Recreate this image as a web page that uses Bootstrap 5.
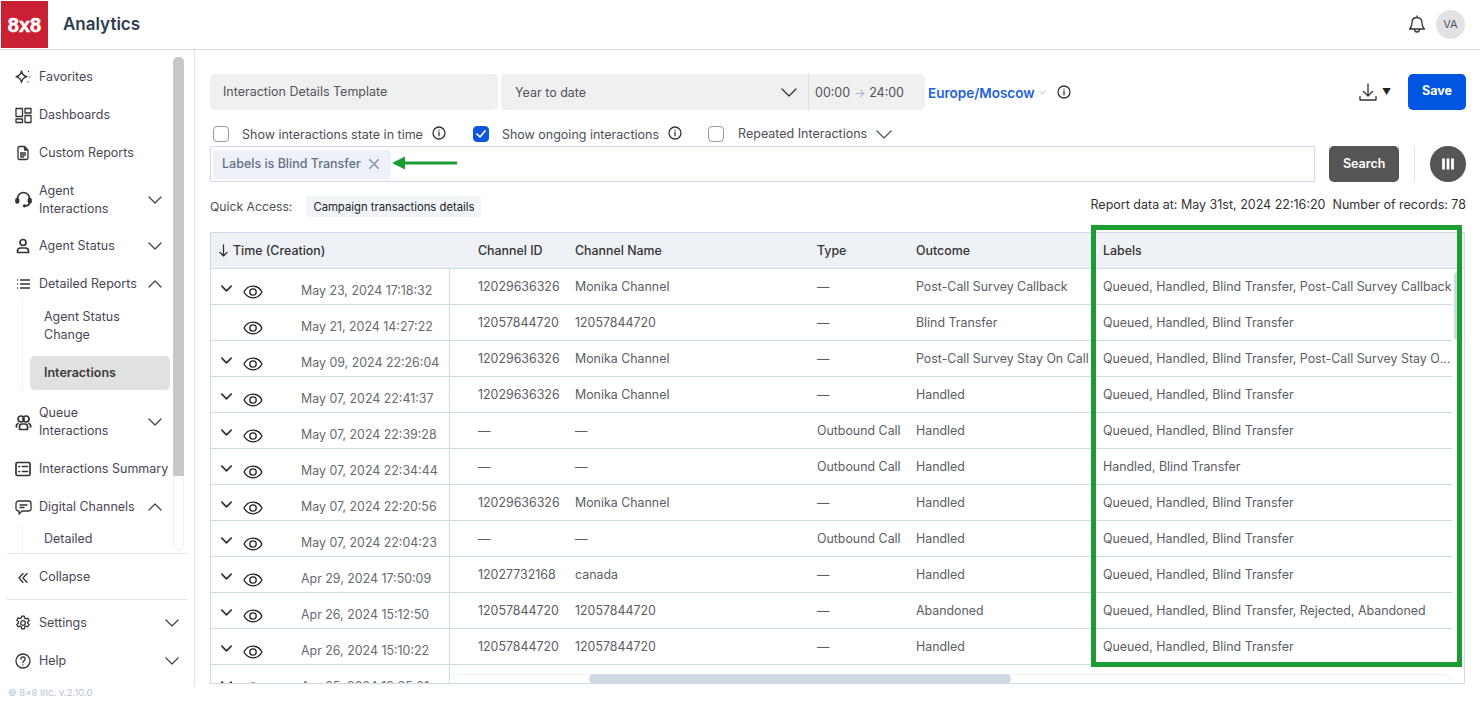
<!DOCTYPE html>
<html lang="en">
<head>
    <meta charset="UTF-8">
    <meta name="viewport" content="width=device-width, initial-scale=1.0">
    <title>Analytics</title>
    <link href="https://cdn.jsdelivr.net/npm/bootstrap@5.3.0/dist/css/bootstrap.min.css" rel="stylesheet">
    <style>
        html, body { height: 705px; overflow: hidden; }
        body { font-family: Inter, "Liberation Sans", sans-serif; font-size: 12.5px; color: #4b4f57; background: #fff; position: relative; }
        svg { display: block; flex: none; fill: none; stroke: currentColor; stroke-width: 1.3; stroke-linecap: round; stroke-linejoin: round; }
        svg.line-md { stroke-width: 1.7; }
        svg.line-bold { stroke-width: 2.2; }
        svg.line-heavy { stroke-width: 2.8; stroke-linecap: butt; }
        .sprite-defs { position: absolute; }
        .tone-dark { color: #333; }

        .app-top { height: 50px; border-bottom: 1px solid #d5dde5; padding-right: 15px; }
        .logo-box { width: 47px; height: 47px; margin-left: 1px; background: #c92033; color: #fff; font-family: "Liberation Sans", sans-serif; font-weight: 700; font-size: 20px; -webkit-text-stroke: .5px #fff; }
        .app-title { margin-left: 15px; font-size: 17px; font-weight: 600; color: #2c3e50; }
        .user-dot { width: 29px; height: 29px; border-radius: 50%; background: #e3e3e3; color: #4a5568; font-size: 11px; margin-left: 9px; }

        .app-body { height: 655px; }
        .side-bar { width: 195px; height: 636px; border-right: 1px solid #dde1e6; flex: none; }
        .side-scroll { height: 503px; overflow: hidden; position: relative; padding-top: 7px; }
        .side-item { height: 38px; padding: 2px 32px 0 15px; color: #4a4653; }
        .side-item.tall { height: 55px; line-height: 18px; padding-top: 2px; }
        .side-item.tall-q { height: 56px; margin-top: 3px; }
        .side-item.wide-txt { padding-right: 0; }
        .side-item .ico { width: 24px; flex: none; color: #333; }
        .side-item .label-txt { flex: 1; white-space: nowrap; }
        .side-item .chev { color: #444; }
        .side-sub { margin-left: 22px; border-left: 1px solid #eee; padding: 6px 24px 0 7px; }
        .side-sub a { display: block; color: #4a4653; text-decoration: none; line-height: 18px; padding-left: 14px; }
        .side-sub a.on { background: #e1e1e1; border-radius: 5px; height: 34px; line-height: 33px; margin-top: 12px; font-weight: 600; color: #3a3a3a; }
        .side-sub.clip { padding-top: 5px; height: 44px; }
        .scroll-track { position: absolute; left: 173px; top: 7px; width: 11px; height: 493px; border: 1px solid #f0f0f0; border-radius: 4px; }
        .scroll-thumb { position: absolute; left: 173px; top: 7px; width: 11px; height: 419px; background: #c8c8c8; border-radius: 5px 5px 0 0; }
        .side-rule { border-top: 1px solid #e2e2e2; margin: 0 7px; }
        .side-rule.low { margin-top: 4px; margin-bottom: 3px; }
        .side-item.side-foot { padding-right: 15px; }
        .side-item.collapse-row { height: 41px; padding-top: 6px; }
        .copy-txt { position: absolute; left: 8px; top: 686px; font-size: 9.5px; color: #b5c4d6; }

        .main-area { padding: 24px 14px 0 15px; min-width: 0; }
        .soft-field { height: 36px; background: #f0f0f0; border-radius: 5px; color: #50535a; }
        .tpl-field { width: 288px; padding-left: 13px; }
        .range-field { width: 424px; margin-left: 3px; padding-left: 14px; }
        .range-field > span:first-child { padding-top: 3px; }
        .range-chev { margin-right: 11px; }
        .time-part { border-left: 1px solid #dedede; height: 36px; width: 117px; padding-left: 6px; padding-top: 3px; white-space: nowrap; }
        .time-part em { font-style: normal; color: #a9b6c6; }
        .zone-link { margin-left: 3px; padding-top: 3px; font-size: 13.5px; font-weight: 600; color: #1d5fdc; text-decoration: none; }
        .zone-chev { color: #8fa3bd; margin-left: 4px; }
        .zone-info { margin-left: 11px; }
        .down-caret { font-size: 9px; color: #222; margin-right: 17px; margin-left: 4px; }
        .save-btn { width: 58px; height: 36px; background: #0056e0; border: 0; color: #fff; font-weight: 700; font-size: 12.5px; padding: 0 0 2px; border-radius: 5px; }

        .check-row { height: 20px; margin-top: 14px; padding-left: 3px; }
        .box-check { width: 16px; height: 16px; border: 1px solid #9a9a9a; border-radius: 4px; flex: none; background: #fff; }
        .box-check.on { background: #0d56df; border-color: #0d56df; color: #fff; margin-left: 27px; }
        .box-check.third { margin-left: 26px; }
        .check-txt { margin-left: 13px; padding-top: 3px; }
        .check-txt.third { margin-left: 14px; padding-top: 0; }
        .check-info { margin-left: 9px; margin-top: -3px; color: #333; }
        .check-chev { margin-left: 9px; color: #555; }

        .filter-row { margin-top: 2px; height: 36px; }
        .filter-box { width: 1105px; height: 36px; border: 1px solid #cfdbe8; padding-left: 2px; flex: none; }
        .chip-tag { width: 178px; height: 29px; background: #eef1f7; border-radius: 3px; padding-left: 9px; color: #667085; font-weight: 500; }
        .chip-tag svg { margin-left: 8px; color: #8f9db3; }
        .search-btn { width: 71px; height: 36px; background: #555; color: #fff; border: 0; border-radius: 5px; font-weight: 600; font-size: 12.5px; margin-left: 14px; padding: 0; }
        .bar-rule { width: 1px; height: 36px; background: #dfe3e8; margin: 0 15px; }
        .round-btn { width: 36px; height: 36px; background: #555; border: 0; border-radius: 50%; color: #fff; padding: 0; }

        .quick-row { height: 21px; margin-top: 14px; }
        .quick-label { padding-top: 1px; font-size: 12.2px; }
        .quick-tag { margin-left: 14px; height: 21px; width: 175px; background: #f1f4f8; border-radius: 3px; padding-left: 7px; padding-top: 1px; font-size: 11.3px; color: #222; white-space: nowrap; }
        .right-note { color: #333; margin-top: -3px; }

        .grid-wrap { margin-top: 15px; width: 1255px; height: 452px; border: 1px solid #cfdbe8; overflow: hidden; position: relative; }
        .data-grid { table-layout: fixed; width: 1253px; margin: 0; border-collapse: separate; border-spacing: 0; font-size: 12.4px; --bs-table-color: #5a5d63; }
        .data-grid th, .data-grid td { height: 36px; padding: 2px 0 0 14px; border-width: 0 0 1px 0; border-style: solid; border-color: #cfdbe8; white-space: nowrap; overflow: hidden; vertical-align: middle; box-shadow: none; }
        .data-grid td.label-cell { text-overflow: ellipsis; }
        .data-grid th { background: #eef1f6; color: #333; font-weight: 500; }
        .data-grid td.time-cell { padding: 0; border-right: 1px solid #cfdbe8; }
        .data-grid td.first-col, .data-grid th.first-col { padding-left: 28px; }
        .data-grid td.no-line { border-bottom: 0; }
        .data-grid th.time-head { padding-left: 8px; }
        .data-grid tr.clip-row td { border-bottom: 0; }
        .sort-arrow { display: inline-block; vertical-align: -2px; margin-right: 5px; color: #333; }
        .time-in { height: 35px; padding-left: 10px; }
        .exp-slot { width: 12px; margin-right: 10px; margin-top: 3px; color: #333; flex: none; }
        .eye-ico { color: #222; margin-top: 11px; }
        .time-txt { margin-left: 38px; margin-top: 9px; color: #666a70; font-size: 12.4px; }

        .h-track { position: absolute; left: 242px; top: 441px; width: 996px; height: 10px; background: #fff; border: 1px solid #f0f1f3; border-radius: 5px; }
        .h-thumb { position: absolute; left: 378px; top: 441px; width: 422px; height: 10px; background: #cfd9e5; border-radius: 5px; }
        .h-mask { position: absolute; left: 239px; top: 432px; width: 1014px; height: 18px; background: #fff; }
        .v-thumb { position: absolute; left: 1243px; top: 39px; width: 7px; height: 68px; background: #cfd9e5; border-radius: 4px; }

        .green-mark { position: absolute; left: 1091px; top: 225px; width: 371px; height: 442px; border: 5px solid #1c9c33; pointer-events: none; }
        .green-arrow { position: absolute; left: 391px; top: 155px; color: #1c9c33; }
    </style>
</head>
<body>
    <svg class="sprite-defs" width="0" height="0">
        <symbol id="i-chev" viewBox="0 0 14 8"><path d="M1 1l6 6 6-6"/></symbol>
        <symbol id="i-up" viewBox="0 0 14 8"><path d="M1 7l6-6 6 6"/></symbol>
        <symbol id="i-info" viewBox="0 0 14 14"><circle cx="7" cy="7" r="6"/><path d="M7 6.200v3.600M7 4.100v.2"/></symbol>
        <symbol id="i-eye" viewBox="0 0 20 14"><path d="M1 7c2-3.800 5-5.800 9-5.800s7 2 9 5.800c-2 3.800-5 5.800-9 5.800s-7-2-9-5.800z"/><circle cx="10" cy="7" r="3.200"/></symbol>
    </svg>

    <header class="app-top d-flex align-items-center">
        <div class="logo-box d-flex align-items-center justify-content-center">8x8</div>
        <div class="app-title">Analytics</div>
        <div class="ms-auto d-flex align-items-center">
            <svg class="tone-dark" width="20" height="20" viewBox="0 0 20 20"><path d="M10 2.500c-3.200 0-5 2.300-5 5.300 0 3.200-.8 4.700-2.500 6.200h15c-1.700-1.500-2.500-3-2.500-6.200 0-3-1.800-5.300-5-5.300zM10 1v1.500M7.500 14.200c0 1.600 1 2.800 2.500 2.800s2.500-1.200 2.500-2.800"/></svg>
            <div class="user-dot d-flex align-items-center justify-content-center">VA</div>
        </div>
    </header>

    <div class="app-body d-flex">
        <aside class="side-bar d-flex flex-column">
            <div class="side-scroll">
                <div class="side-item d-flex align-items-center"><span class="ico"><svg width="16" height="16" viewBox="0 0 16 16"><path d="M6.500 2c.7 3.500 2.100 4.900 5.500 5.700-3.400.8-4.800 2.200-5.500 5.800-.7-3.600-2.100-5-5.500-5.800 3.400-.8 4.800-2.200 5.500-5.700zM13.500 2.500v.1M14.800 7.800v.1M13 13v.1"/></svg></span><span class="label-txt">Favorites</span></div>
                <div class="side-item d-flex align-items-center"><span class="ico"><svg width="17" height="17" viewBox="0 0 17 17"><path d="M1 1.500h6.500v8H1zM10 1.500h6v4.500h-6zM1 12h6.500v3.500H1zM10 8.500h6v7h-6z"/></svg></span><span class="label-txt">Dashboards</span></div>
                <div class="side-item d-flex align-items-center"><span class="ico"><svg width="16" height="16" viewBox="0 0 16 16"><path d="M3 3c0-1 .6-1.500 1.500-1.500H9.500L13 5v8c0 1-.6 1.500-1.500 1.500h-7C3.600 14.500 3 14 3 13zM9.500 1.500V5H13M5.500 8h5M5.500 10h5M5.500 12h3"/></svg></span><span class="label-txt">Custom Reports</span></div>
                <div class="side-item tall d-flex align-items-center"><span class="ico"><svg class="line-md" width="17" height="17" viewBox="0 0 17 17"><path d="M2.500 8V7.500a6 6 0 0 1 12 0V8M14.500 12c0 1.800-2 2.800-4.500 2.800"/><rect x="1" y="7.500" width="2.500" height="4.500" rx="1.200" fill="currentColor"/><rect x="13.500" y="7.500" width="2.500" height="4.500" rx="1.200" fill="currentColor"/><circle cx="9.500" cy="14.800" r=".8" fill="currentColor"/></svg></span><span class="label-txt">Agent<br>Interactions</span><svg class="chev" width="14" height="8"><use href="#i-chev"/></svg></div>
                <div class="side-item d-flex align-items-center"><span class="ico"><svg class="line-md" width="16" height="16" viewBox="0 0 16 16"><circle cx="8" cy="4.500" r="3"/><path d="M2.500 14.500v-1.500c0-2 1.500-3 3-3h5c1.500 0 3 1 3 3v1.500z"/></svg></span><span class="label-txt">Agent Status</span><svg class="chev" width="14" height="8"><use href="#i-chev"/></svg></div>
                <div class="side-item d-flex align-items-center"><span class="ico"><svg width="16" height="16" viewBox="0 0 16 16"><path d="M5.500 4h9M5.500 8h9M5.500 12h9M2.500 4h.1M2.500 8h.1M2.500 12h.1"/></svg></span><span class="label-txt">Detailed Reports</span><svg class="chev" width="14" height="8"><use href="#i-up"/></svg></div>
                <div class="side-sub">
                    <a href="#">Agent Status<br>Change</a>
                    <a href="#" class="on">Interactions</a>
                </div>
                <div class="side-item tall tall-q d-flex align-items-center"><span class="ico"><svg class="line-md" width="17" height="17" viewBox="0 0 17 17"><circle cx="6" cy="5" r="3"/><circle cx="11" cy="5" r="3"/><path d="M3 9.500C1.800 10.200 1 11.500 1.500 13M14 9.500c1.200.7 2 2 1.500 3.500M4.500 15.500v-3c0-1.500 1-2.500 2.500-2.500h3c1.500 0 2.500 1 2.500 2.500v3z"/></svg></span><span class="label-txt">Queue<br>Interactions</span><svg class="chev" width="14" height="8"><use href="#i-chev"/></svg></div>
                <div class="side-item wide-txt d-flex align-items-center"><span class="ico"><svg class="line-md" width="16" height="16" viewBox="0 0 16 16"><rect x="1" y="1.500" width="14" height="13" rx="1.500"/><path d="M7.500 5.500h5M7.500 10.500h5M4 5.500h.6M4 10.500h.6"/></svg></span><span class="label-txt">Interactions Summary</span></div>
                <div class="side-item d-flex align-items-center"><span class="ico"><svg width="17" height="17" viewBox="0 0 17 17"><path d="M3.500 2h10c1.300 0 2.500 1 2.500 2.500v5c0 1.500-1.200 2.500-2.500 2.500H7l-3 3v-3h-.5C2.200 12 1 11 1 9.500v-5C1 3 2.200 2 3.500 2zM5 6h7M5 8.500h4"/></svg></span><span class="label-txt">Digital Channels</span><svg class="chev" width="14" height="8"><use href="#i-up"/></svg></div>
                <div class="side-sub clip">
                    <a href="#">Detailed</a>
                </div>
                <div class="scroll-track"></div>
                <div class="scroll-thumb"></div>
            </div>
            <div class="side-rule"></div>
            <div class="side-item side-foot collapse-row d-flex align-items-center"><span class="ico"><svg width="13" height="10" viewBox="0 0 13 10"><path d="M8 .5L4 5l4 4.500M12 .5L8 5l4 4.500"/></svg></span><span class="label-txt">Collapse</span></div>
            <div class="side-rule low"></div>
            <div class="side-item side-foot d-flex align-items-center"><span class="ico"><svg width="16" height="16" viewBox="0 0 16 16"><path d="M6.700 1.200h2.600l.4 2 1.300.7 1.900-.7 1.300 2.300-1.500 1.300v1.400l1.500 1.300-1.300 2.300-1.900-.7-1.300.7-.4 2H6.700l-.4-2-1.300-.7-1.900.7-1.300-2.300 1.500-1.300V6.500L1.800 5.200l1.300-2.300 1.900.7 1.300-.7z"/><circle cx="8" cy="8" r="2.300"/></svg></span><span class="label-txt">Settings</span><svg class="chev" width="14" height="8"><use href="#i-chev"/></svg></div>
            <div class="side-item side-foot d-flex align-items-center"><span class="ico"><svg width="16" height="16" viewBox="0 0 16 16"><circle cx="8" cy="8" r="7"/><path d="M5.800 6.200c0-1.400 1-2.200 2.200-2.200s2.200.8 2.200 2c0 1.700-2.200 1.700-2.200 3.500M8 11.800v.2"/></svg></span><span class="label-txt">Help</span><svg class="chev" width="14" height="8"><use href="#i-chev"/></svg></div>
        </aside>

        <main class="main-area flex-grow-1">
            <div class="d-flex align-items-center">
                <div class="soft-field tpl-field d-flex align-items-center">Interaction Details Template</div>
                <div class="soft-field range-field d-flex align-items-center">
                    <span>Year to date</span>
                    <svg class="ms-auto range-chev tone-dark" width="16" height="9" viewBox="0 0 16 9"><path d="M1 1l7 7 7-7"/></svg>
                    <span class="time-part d-flex align-items-center">00:00&nbsp;<em>→</em>&nbsp;24:00</span>
                </div>
                <a href="#" class="zone-link">Europe/Moscow</a>
                <svg class="zone-chev" width="7" height="5" viewBox="0 0 14 8"><path d="M1 1l6 6 6-6"/></svg>
                <svg class="zone-info tone-dark" width="14" height="14"><use href="#i-info"/></svg>
                <svg class="ms-auto tone-dark" width="20" height="20" viewBox="0 0 20 20"><path d="M10 2v12M5.500 9.500L10 14l4.500-4.500M2 14.500V18h16v-3.500"/></svg>
                <span class="down-caret">▼</span>
                <button class="save-btn">Save</button>
            </div>

            <div class="check-row d-flex align-items-center">
                <span class="box-check"></span><span class="check-txt">Show interactions state in time</span>
                <svg class="check-info" width="14" height="14"><use href="#i-info"/></svg>
                <span class="box-check on d-flex align-items-center justify-content-center"><svg class="line-md" width="10" height="8" viewBox="0 0 10 8"><path d="M1 4l3 3 5-6"/></svg></span><span class="check-txt">Show ongoing interactions</span>
                <svg class="check-info" width="14" height="14"><use href="#i-info"/></svg>
                <span class="box-check third"></span><span class="check-txt third">Repeated Interactions</span>
                <svg class="check-chev" width="16" height="9" viewBox="0 0 16 9"><path d="M1 1l7 7 7-7"/></svg>
            </div>

            <div class="filter-row d-flex align-items-center">
                <div class="filter-box d-flex align-items-center">
                    <div class="chip-tag d-flex align-items-center">Labels is Blind Transfer<svg class="line-md" width="10" height="10" viewBox="0 0 10 10"><path d="M.5.5l9 9M9.500.5l-9 9"/></svg></div>
                </div>
                <button class="search-btn">Search</button>
                <span class="bar-rule"></span>
                <button class="round-btn d-flex align-items-center justify-content-center"><svg class="line-heavy" width="12" height="12" viewBox="0 0 12 12"><path d="M1.500 .5v11M6 .5v11M10.500 .5v11"/></svg></button>
            </div>

            <div class="quick-row d-flex align-items-center">
                <span class="quick-label">Quick Access:</span>
                <span class="quick-tag d-flex align-items-center">Campaign transactions details</span>
                <span class="right-note ms-auto">Report data at: May 31st, 2024 22:16:20&nbsp; Number of records: 78</span>
            </div>

            <div class="grid-wrap">
                <table class="table data-grid">
                    <colgroup><col width="239"><col width="111"><col width="242"><col width="99"><col width="187"><col width="363"><col width="12"></colgroup>
                    <thead>
                        <tr>
                            <th class="time-head"><svg class="sort-arrow" width="9" height="13" viewBox="0 0 9 13"><path d="M4.500 1v11M1 8.500L4.500 12 8 8.500"/></svg>Time (Creation)</th>
                            <th class="first-col">Channel ID</th>
                            <th>Channel Name</th>
                            <th>Type</th>
                            <th>Outcome</th>
                            <th>Labels</th>
                            <th></th>
                        </tr>
                    </thead>
                    <tbody id="gridBody"></tbody>
                </table>
                <div class="h-mask"></div>
                <div class="h-track"></div>
                <div class="h-thumb"></div>
                <div class="v-thumb"></div>
            </div>
        </main>
    </div>

    <div class="copy-txt">© 8x8 Inc. v.2.10.0</div>

    <div class="green-mark"></div>
    <svg class="green-arrow line-heavy" width="68" height="16" viewBox="0 0 68 16"><path d="M12 8h54"/><path d="M1 8l13-6.500v13z" fill="currentColor" stroke="none"/></svg>

    <script>
        // rows of the report
        const rows = [
            [1, 'May 23, 2024 17:18:32', '12029636326', 'Monika Channel', '—', 'Post-Call Survey Callback', 'Queued, Handled, Blind Transfer, Post-Call Survey Callback'],
            [0, 'May 21, 2024 14:27:22', '12057844720', '12057844720', '—', 'Blind Transfer', 'Queued, Handled, Blind Transfer'],
            [1, 'May 09, 2024 22:26:04', '12029636326', 'Monika Channel', '—', 'Post-Call Survey Stay On Call', 'Queued, Handled, Blind Transfer, Post-Call Survey Stay On Call'],
            [1, 'May 07, 2024 22:41:37', '12029636326', 'Monika Channel', '—', 'Handled', 'Queued, Handled, Blind Transfer'],
            [1, 'May 07, 2024 22:39:28', '—', '—', 'Outbound Call', 'Handled', 'Queued, Handled, Blind Transfer'],
            [1, 'May 07, 2024 22:34:44', '—', '—', 'Outbound Call', 'Handled', 'Handled, Blind Transfer'],
            [1, 'May 07, 2024 22:20:56', '12029636326', 'Monika Channel', '—', 'Handled', 'Queued, Handled, Blind Transfer'],
            [1, 'May 07, 2024 22:04:23', '—', '—', 'Outbound Call', 'Handled', 'Queued, Handled, Blind Transfer'],
            [1, 'Apr 29, 2024 17:50:09', '12027732168', 'canada', '—', 'Handled', 'Queued, Handled, Blind Transfer'],
            [1, 'Apr 26, 2024 15:12:50', '12057844720', '12057844720', '—', 'Abandoned', 'Queued, Handled, Blind Transfer, Rejected, Abandoned'],
            [1, 'Apr 26, 2024 15:10:22', '12057844720', '12057844720', '—', 'Handled', 'Queued, Handled, Blind Transfer']
        ];

        function timeCell(open, time) {
            const chev = open ? '<svg class="line-bold" width="11" height="7" viewBox="0 0 14 8"><path d="M1 1l6 6 6-6"/></svg>' : '';
            return `<td class="time-cell"><div class="time-in d-flex align-items-center">
                <span class="exp-slot">${chev}</span>
                <svg class="eye-ico" width="20" height="14"><use href="#i-eye"/></svg>
                <span class="time-txt">${time}</span>
            </div></td>`;
        }

        let html = '';
        rows.forEach(r => {
            html += `<tr>${timeCell(r[0], r[1])}
                <td class="first-col">${r[2]}</td><td>${r[3]}</td><td>${r[4]}</td><td>${r[5]}</td><td class="label-cell">${r[6]}</td><td class="no-line"></td></tr>`;
        });
        html += `<tr class="clip-row">${timeCell(1, 'Apr 25, 2024 19:35:01')}<td colspan="6"></td></tr>`;
        document.getElementById('gridBody').innerHTML = html;
    </script>
    <script src="https://cdn.jsdelivr.net/npm/bootstrap@5.3.0/dist/js/bootstrap.bundle.min.js"></script>
</body>
</html>
